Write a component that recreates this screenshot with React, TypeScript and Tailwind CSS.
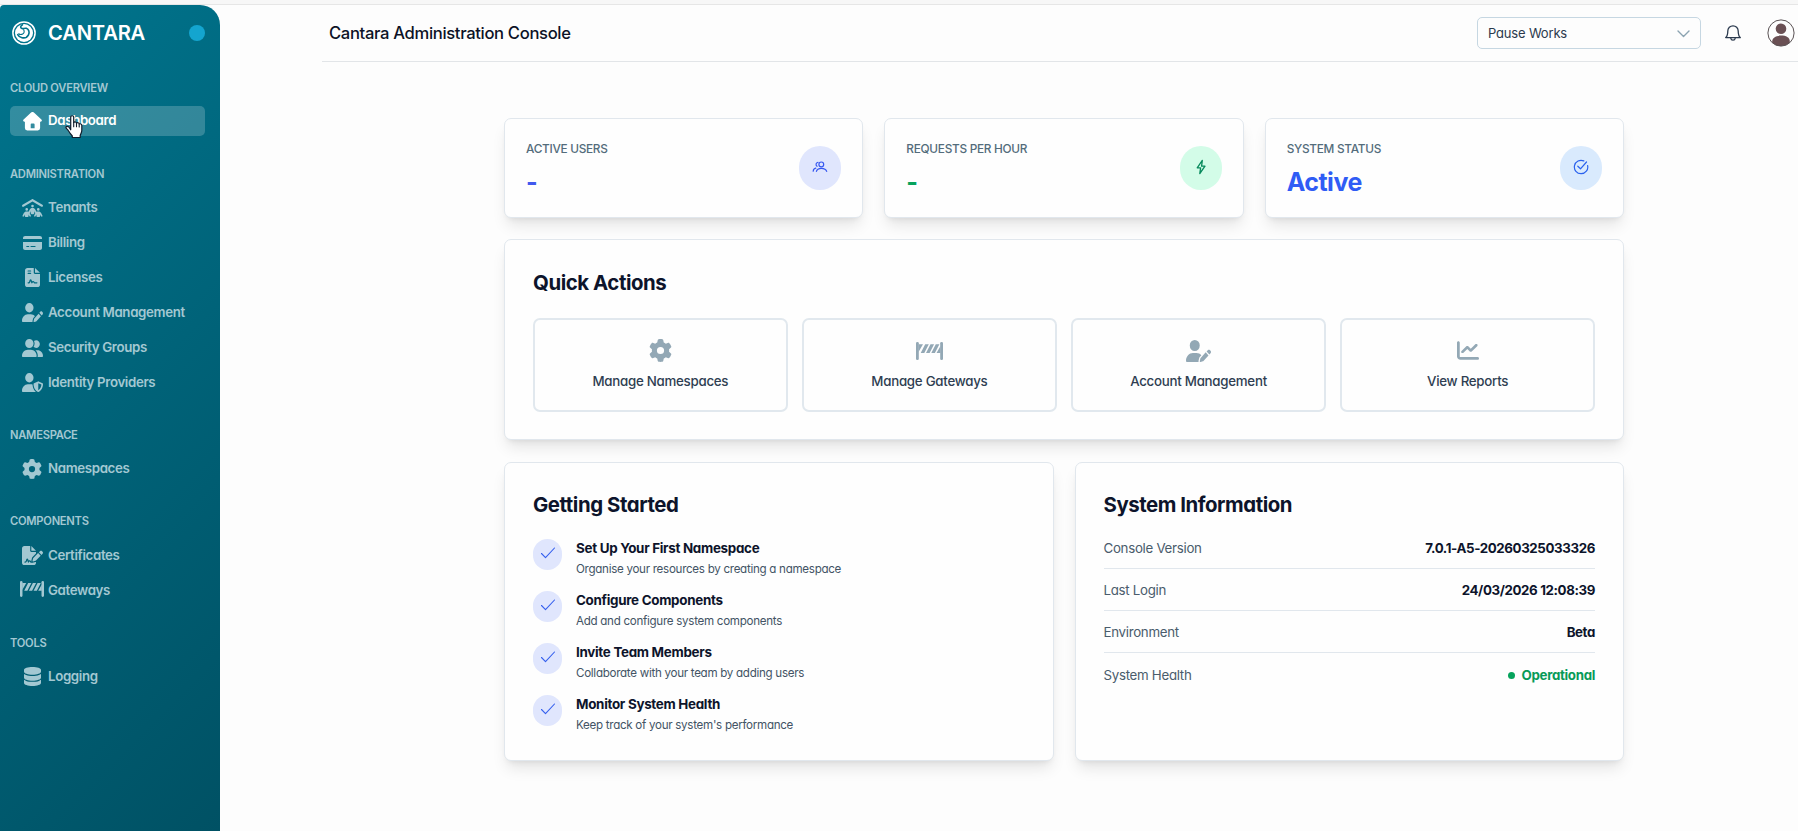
import type { ReactNode } from 'react';
import {
  FaChartLine,
  FaCreditCard,
  FaDatabase,
  FaFileContract,
  FaFileSignature,
  FaGear,
  FaPeopleRoof,
  FaUserGroup,
  FaUserPen,
  FaUserShield,
} from 'react-icons/fa6';

interface IconProps {
  className?: string;
}

function HouseIcon({ className }: IconProps) {
  return (
    <svg viewBox="0 0 19 19" fill="currentColor" className={className} aria-hidden>
      <path
        fillRule="evenodd"
        d="M8.1.6a2 2 0 0 1 2.8 0l7.5 6.9c.9.9.4 2.2-.8 2.2h-.5v6.4a2.3 2.3 0 0 1-2.3 2.3H4.2a2.3 2.3 0 0 1-2.3-2.3V9.7H1.4C.2 9.7-.3 8.4.6 7.5zM8.6 11.5a.9.9 0 0 0-.9.9v3.9h3.9v-3.9a.9.9 0 0 0-.9-.9z"
      />
    </svg>
  );
}

function BarrierIcon({ className }: IconProps) {
  return (
    <svg viewBox="0 0 27 18" fill="currentColor" className={className} aria-hidden>
      <rect x="0" y="0" width="2.8" height="18" rx="1.3" />
      <rect x="24.2" y="0" width="2.8" height="18" rx="1.3" />
      <path d="M2.5 2.3h4.5L2.5 10zM9.2 2.3h3.6L8.3 11H4.7zM14.5 2.3h3.6L13.6 11H10zM19.8 2.3h3.6L18.9 11h-3.6zM24.500 4v7h-4z" />
    </svg>
  );
}

function UsersIcon() {
  return (
    <svg viewBox="0 0 16 16" fill="none" stroke="currentColor" strokeWidth="1.2" strokeLinecap="round" className="size-4" aria-hidden>
      <circle cx="9.3" cy="5.4" r="2.4" />
      <path d="M4.400 12.400c.5-2.100 2.300-3.100 4.900-3.100s4.800 1 5.400 3.100M6 3.300a2.200 2.200 0 0 0-1 4M1.200 12.200c.1-1.700.9-2.700 2.600-3.100" />
    </svg>
  );
}

function BoltIcon() {
  return (
    <svg viewBox="0 0 16 16" fill="none" stroke="currentColor" strokeWidth="1.3" strokeLinejoin="round" className="size-4" aria-hidden>
      <path d="M9.3 1.3 4.2 8.8h3.4l-.8 5.700L12 7.200H8.600z" />
    </svg>
  );
}

function CheckCircleIcon() {
  return (
    <svg viewBox="0 0 16 16" fill="none" stroke="currentColor" strokeWidth="1.2" strokeLinecap="round" strokeLinejoin="round" className="size-4" aria-hidden>
      <path d="M14.6 6.5A6.7 6.7 0 1 1 10.8 1.9" />
      <path d="m4.8 7.2 2.7 2.6 6-6.8" />
    </svg>
  );
}

function LogoIcon() {
  return (
    <svg viewBox="0 0 24 24" className="size-6" aria-hidden>
      <circle cx="12" cy="12" r="11.1" fill="none" stroke="#fff" strokeWidth="1.5" />
      <circle cx="12" cy="12" r="9" fill="#fff" />
      {/* swirl cut out of the disc */}
      <path
        d="M10.500 3.800C8 5.200 8.200 7.300 10.300 7.600c1.300.2 2.500-.8 4-.3 2.600 1 3.500 4 2.200 6.500-1.300 2.400-4 3.500-6.500 2.900-2-.4-3.600-1.600-4.300-3"
        fill="none"
        stroke="#00728b"
        strokeWidth="1.6"
        strokeLinecap="round"
      />
      <path d="M11.600 8.800c1 1.400.7 3.300-.9 4.200-1.200.7-2.900.6-4-.2" fill="none" stroke="#00728b" strokeWidth="1.1" strokeLinecap="round" />
    </svg>
  );
}

function HandCursor() {
  return (
    <svg viewBox="0 0 18 24" className="absolute left-[55px] top-[9px] z-10 h-6 w-[18px]" aria-hidden>
      <path
        d="M5.700 14.800V2.300c0-2.100 3-2.100 3 0v5.200c.8-.9 2.600-.6 2.800.6.900-.7 2.500-.4 2.700.8.900-.4 2.600 0 2.600 1.500v5.200c0 2-1.200 3.300-1.600 4.900v2H7.300v-1.500C6 19.500 4.600 17.700 3.600 16 2.700 14.300.6 13.400.9 12.200c.4-1.200 2-1.100 3-.2z"
        fill="#fff"
        stroke="#101c2c"
        strokeWidth="1.2"
        strokeLinejoin="round"
      />
      <path d="M8.700 7.500v4.300M11.500 8.200v3.600M14.200 9.200v2.800" stroke="#101c2c" strokeWidth="1.1" strokeLinecap="round" />
    </svg>
  );
}

interface NavItem {
  label: string;
  icon: ReactNode;
  active?: boolean;
}

const NAV: { title: string; items: NavItem[] }[] = [
  {
    title: 'Cloud Overview',
    items: [{ label: 'Dashboard', icon: <HouseIcon className="size-[19px]" />, active: true }],
  },
  {
    title: 'Administration',
    items: [
      { label: 'Tenants', icon: <FaPeopleRoof preserveAspectRatio="none" className="h-[18px] w-[21px]" /> },
      { label: 'Billing', icon: <FaCreditCard preserveAspectRatio="none" className="h-4 w-[19px]" /> },
      { label: 'Licenses', icon: <FaFileContract preserveAspectRatio="none" className="h-[19px] w-[15px]" /> },
      { label: 'Account Management', icon: <FaUserPen preserveAspectRatio="none" className="h-[19px] w-[21px]" /> },
      { label: 'Security Groups', icon: <FaUserGroup preserveAspectRatio="none" className="h-[18px] w-[21px]" /> },
      { label: 'Identity Providers', icon: <FaUserShield preserveAspectRatio="none" className="h-[19px] w-[21px]" /> },
    ],
  },
  {
    title: 'Namespace',
    items: [{ label: 'Namespaces', icon: <FaGear className="size-[20px]" /> }],
  },
  {
    title: 'Components',
    items: [
      { label: 'Certificates', icon: <FaFileSignature preserveAspectRatio="none" className="h-[19px] w-[21px]" /> },
      { label: 'Gateways', icon: <BarrierIcon className="-mt-1 h-4 w-6" /> },
    ],
  },
  {
    title: 'Tools',
    items: [{ label: 'Logging', icon: <FaDatabase preserveAspectRatio="none" className="h-[19px] w-[17px]" /> }],
  },
];

const STATS = [
  { label: 'Active Users', value: '-', color: 'text-[#4159ee]', badge: 'bg-[#e0e6fd] text-[#3758f0]', icon: <UsersIcon /> },
  { label: 'Requests Per Hour', value: '-', color: 'text-[#06a35c]', badge: 'bg-[#d3fce8] text-[#078a5c]', icon: <BoltIcon /> },
  { label: 'System Status', value: 'Active', color: 'text-[#2f5cf5]', badge: 'bg-[#d9eafd] text-[#2b62ee]', icon: <CheckCircleIcon /> },
];

const ACTIONS = [
  { label: 'Manage Namespaces', icon: <FaGear className="size-[23px]" /> },
  { label: 'Manage Gateways', icon: <BarrierIcon className="h-[18px] w-[27px]" /> },
  { label: 'Account Management', icon: <FaUserPen preserveAspectRatio="none" className="h-[22px] w-[25px]" /> },
  { label: 'View Reports', icon: <FaChartLine preserveAspectRatio="none" className="h-[21px] w-[22px]" /> },
];

const STEPS = [
  { title: 'Set Up Your First Namespace', text: 'Organise your resources by creating a namespace' },
  { title: 'Configure Components', text: 'Add and configure system components' },
  { title: 'Invite Team Members', text: 'Collaborate with your team by adding users' },
  { title: 'Monitor System Health', text: "Keep track of your system's performance" },
];

const INFO = [
  { label: 'Console Version', value: '7.0.1-A5-20260325033326' },
  { label: 'Last Login', value: '24/03/2026 12:08:39' },
  { label: 'Environment', value: 'Beta' },
];

const CARD = 'rounded-[7px] border border-[#e1e7ed] bg-[#fefefe] shadow-lg';
const HEADING = 'text-[20.4px] font-bold leading-[25px] tracking-[-0.022em] text-[#0d142b]';

function Sidebar() {
  return (
    <aside className="w-[220px] shrink-0 rounded-tl-[4px] rounded-tr-[20px] bg-linear-135 from-[#00758e] to-[#005164] px-2.5">
      <div className="flex h-14 items-center pr-[5px]">
        <div className="ml-0.5">
          <LogoIcon />
        </div>
        <span className="ml-3 text-[20.2px] font-semibold tracking-[-0.01em] text-white">CANTARA</span>
        <span className="ml-auto size-4 rounded-full bg-[#14a5cf]" />
      </div>
      <nav className="mt-[18.5px] flex flex-col gap-[29.6px]">
        {NAV.map((section) => (
          <div key={section.title}>
            <h3 className="text-[11.2px] font-semibold uppercase leading-4 tracking-[-0.024em] text-[#a3c8d2]">{section.title}</h3>
            <ul className="mt-[10.7px] flex flex-col gap-[5px]">
              {section.items.map((item) => (
                <li
                  key={item.label}
                  className={`relative mr-[5px] flex h-[30px] items-center rounded-[5px] text-[13.3px] font-semibold tracking-[-0.027em] ${
                    item.active ? 'bg-white/20 text-white' : 'pt-px text-[#a3c8d2]'
                  }`}
                >
                  <span className="ml-[10px] flex w-6 justify-center">{item.icon}</span>
                  <span className="ml-[4px]">{item.label}</span>
                  {item.active && <HandCursor />}
                </li>
              ))}
            </ul>
          </div>
        ))}
      </nav>
    </aside>
  );
}

function Header() {
  return (
    <header className="ml-[102px] flex h-[57px] items-center border-b border-[#e2e5e8] pl-[7px] pr-[3px]">
      <h1 className="text-[16.6px] font-[550] tracking-[-0.02em] text-[#0c1226] [font-feature-settings:normal]">Cantara Administration Console</h1>
      <div className="ml-auto flex h-8 w-[224px] items-center justify-between rounded-[5px] border border-[#c6d7e2] px-[10px] pt-px text-[13px] tracking-[-0.014em] text-[#2c3a4d]">
        Pause Works
        <svg viewBox="0 0 13 8" fill="none" stroke="#8ba3b1" strokeWidth="1.4" strokeLinecap="round" strokeLinejoin="round" className="h-2 w-[13px]" aria-hidden>
          <path d="m1 1 5.5 5.5L12 1" />
        </svg>
      </div>
      <svg viewBox="0 0 18 18" fill="none" stroke="#2b3a4e" strokeWidth="1.3" strokeLinejoin="round" strokeLinecap="round" className="ml-[23px] size-[18px]" aria-hidden>
        <path d="M1.7 13.6C3.6 12 3.8 10 3.8 7a5.2 5.2 0 0 1 10.4 0c0 3 .2 5 2.1 6.6z" />
        <path d="M6.8 14.2c.3 2.6 4.1 2.6 4.4 0" />
      </svg>
      <svg viewBox="0 0 28 28" className="ml-[25px] size-7" aria-hidden>
        <clipPath id="avatar">
          <circle cx="14" cy="14" r="13" />
        </clipPath>
        <g clipPath="url(#avatar)" fill="#6a5054">
          <circle cx="14" cy="9.7" r="5.3" />
          <path d="M5.2 28v-5.5c0-3.9 3.7-5.900 8.800-5.900s8.800 2 8.800 5.900V28z" />
        </g>
        <circle cx="14" cy="14" r="13.1" fill="none" stroke="#5a5254" strokeWidth="1" />
      </svg>
    </header>
  );
}

export default function App() {
  return (
    <div className="flex h-[831px] w-full flex-col overflow-hidden bg-[#fdfdfd] font-['Inter',sans-serif] tracking-[-0.018em] [font-feature-settings:'cv11']">
      <div className="h-[5px] shrink-0 border-b border-[#e6e6e6] bg-[#f7f7f7]" />
      <div className="flex min-h-0 flex-1">
        <Sidebar />
        <div className="min-w-0 flex-1">
          <Header />
          <main className="ml-[284px] mt-[56px] flex w-[1120px] flex-col gap-[21.3px]">
            <section className="grid grid-cols-3 gap-[21px]">
              {STATS.map((stat) => (
                <div key={stat.label} className={`flex h-[99.6px] items-center justify-between px-[21px] ${CARD}`}>
                  <div className="self-start pt-[22px]">
                    <p className="text-[11.8px] font-[550] uppercase leading-4 tracking-[-0.023em] text-[#536c7b]">{stat.label}</p>
                    <p className={`mt-[8.5px] text-[25px] font-bold leading-[33px] tracking-[-0.02em] ${stat.color}`}>{stat.value}</p>
                  </div>
                  <div className={`flex h-11 w-[42px] items-center justify-center rounded-full pb-0.5 ${stat.badge}`}>{stat.icon}</div>
                </div>
              ))}
            </section>

            <section className={`h-[201.5px] px-[28px] pt-[30px] ${CARD}`}>
              <h2 className={HEADING}>Quick Actions</h2>
              <div className="mt-[23px] grid grid-cols-4 gap-[14.4px]">
                {ACTIONS.map((action) => (
                  <button
                    key={action.label}
                    type="button"
                    className="flex h-[94px] flex-col items-center rounded-[7px] border-2 border-[#e1e8ee] pt-[18.5px] text-[13.3px] font-[550] tracking-[-0.02em] text-[#2f3e52]"
                  >
                    <span className="flex h-[25px] items-center text-[#93a8b5]">{action.icon}</span>
                    <span className="mt-[8.5px] leading-[19px]">{action.label}</span>
                  </button>
                ))}
              </div>
            </section>

            <section className="grid grid-cols-2 gap-[21px]">
              <div className={`h-[299.5px] px-[28px] pt-[29px] ${CARD}`}>
                <h2 className={HEADING}>Getting Started</h2>
                <ul className="mt-[22px] flex flex-col gap-[13px]">
                  {STEPS.map((step) => (
                    <li key={step.title} className="flex h-[39px]">
                      <span className="flex h-[31px] w-[29px] shrink-0 items-center justify-center rounded-full bg-[#e0e6fd] pb-[3px]">
                        <svg viewBox="0 0 16 12" fill="none" stroke="#3560ee" strokeWidth="1.1" strokeLinecap="round" strokeLinejoin="round" className="h-3 w-4" aria-hidden>
                          <path d="m1.5 6.5 4 4.200L14.500 1" />
                        </svg>
                      </span>
                      <div className="ml-[14px]">
                        <p className="text-[13.4px] font-[650] leading-[19px] tracking-[-0.022em] text-[#0d142b]">{step.title}</p>
                        <p className="mt-[3.5px] text-[11.6px] leading-4 text-[#435465]">{step.text}</p>
                      </div>
                    </li>
                  ))}
                </ul>
              </div>

              <div className={`h-[299.5px] px-[28px] pt-[29px] ${CARD}`}>
                <h2 className={HEADING}>System Information</h2>
                <dl className="mt-[10px] text-[13.3px]">
                  {INFO.map((row) => (
                    <div key={row.label} className="flex h-[42.2px] items-center justify-between border-b border-[#e1e7ed] pt-[3px]">
                      <dt className="tracking-[-0.022em] text-[#4a5c6c]">{row.label}</dt>
                      <dd className="font-[650] tracking-[-0.028em] text-[#0d142b]">{row.value}</dd>
                    </div>
                  ))}
                  <div className="flex h-[42.2px] items-center justify-between pt-[3px]">
                    <dt className="tracking-[-0.022em] text-[#4a5c6c]">System Health</dt>
                    <dd className="flex items-center gap-[7px] font-[650] tracking-[-0.024em] text-[#079a58]">
                      <span className="size-[7px] rounded-full bg-[#06a35c]" />
                      Operational
                    </dd>
                  </div>
                </dl>
              </div>
            </section>
          </main>
        </div>
      </div>
    </div>
  );
}
